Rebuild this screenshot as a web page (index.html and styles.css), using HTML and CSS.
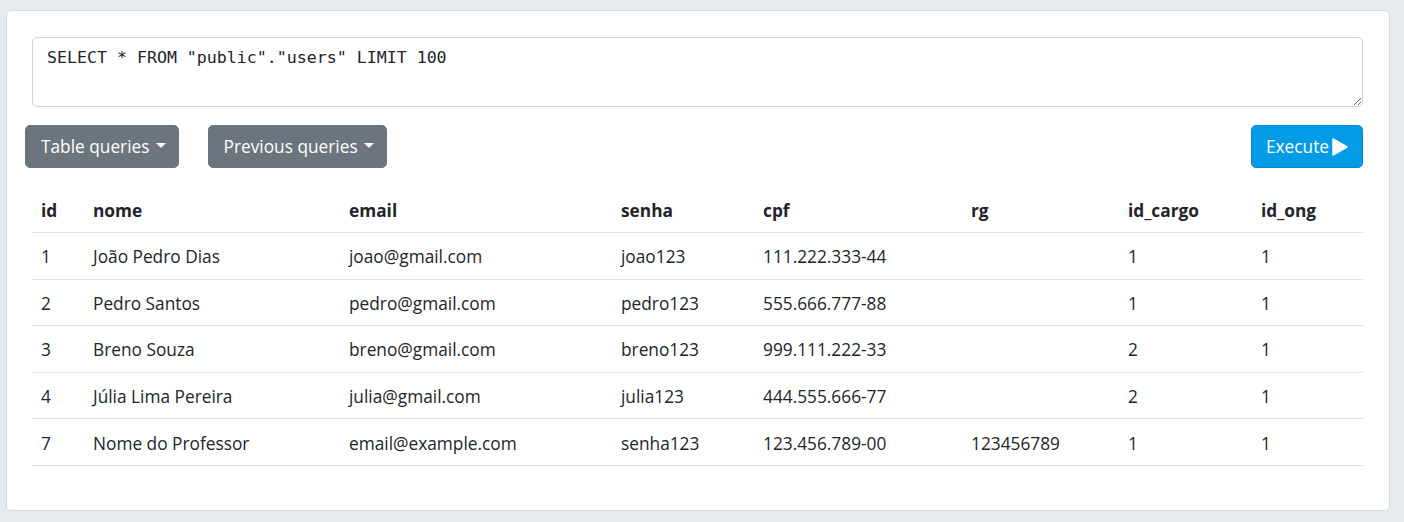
FILE: index.html
```html
<!DOCTYPE html>
<html lang="pt">
<head>
<meta charset="utf-8">
<title>Query</title>
<link rel="stylesheet" href="styles.css">
</head>
<body>
<div class="page">
  <div class="card">
    <textarea class="sql" spellcheck="false">SELECT * FROM "public"."users" LIMIT 100</textarea>
    <div class="toolbar">
      <button class="btn btn-gray">Table queries<span class="caret"></span></button>
      <button class="btn btn-gray">Previous queries<span class="caret"></span></button>
      <span class="spacer"></span>
      <button class="btn btn-blue">Execute<svg class="play" viewBox="0 0 16 18" width="16" height="18"><path d="M1 1 L15 9 L1 17 Z" fill="#fff" stroke="#fff" stroke-width="1.5" stroke-linejoin="round"/></svg></button>
    </div>
    <table class="results">
      <colgroup>
        <col class="c-id"><col class="c-nome"><col class="c-email"><col class="c-senha"><col class="c-cpf"><col class="c-rg"><col class="c-cargo"><col class="c-ong">
      </colgroup>
      <thead>
        <tr><th>id</th><th>nome</th><th>email</th><th>senha</th><th>cpf</th><th>rg</th><th>id_cargo</th><th>id_ong</th></tr>
      </thead>
      <tbody>
        <tr><td>1</td><td>João Pedro Dias</td><td>joao@gmail.com</td><td>joao123</td><td>111.222.333-44</td><td></td><td>1</td><td>1</td></tr>
        <tr><td>2</td><td>Pedro Santos</td><td>pedro@gmail.com</td><td>pedro123</td><td>555.666.777-88</td><td></td><td>1</td><td>1</td></tr>
        <tr><td>3</td><td>Breno Souza</td><td>breno@gmail.com</td><td>breno123</td><td>999.111.222-33</td><td></td><td>2</td><td>1</td></tr>
        <tr><td>4</td><td>Júlia Lima Pereira</td><td>julia@gmail.com</td><td>julia123</td><td>444.555.666-77</td><td></td><td>2</td><td>1</td></tr>
        <tr><td>7</td><td>Nome do Professor</td><td>email@example.com</td><td>senha123</td><td>123.456.789-00</td><td>123456789</td><td>1</td><td>1</td></tr>
      </tbody>
    </table>
  </div>
</div>
</body>
</html>
```
FILE: styles.css
```css
html, body {
  margin: 0;
  padding: 0;
}
body {
  background: #e5ebef;
  font-family: "Open Sans", "Noto Sans", sans-serif;
  color: #212529;
  height: 522px;
  overflow: hidden;
}
.page {
  padding: 10px 14px 10px 6px;
}
.card {
  background: #fff;
  border: 1px solid #d3dce5;
  border-radius: 5px;
  padding: 26px 26px 44px 25px;
  display: flex;
  flex-direction: column;
}
.sql {
  display: block;
  box-sizing: border-box;
  width: 100%;
  height: 70px;
  margin: 0;
  border: 1px solid #ced4da;
  border-radius: 5px;
  padding: 8px 14px;
  font-family: "DejaVu Sans Mono", monospace;
  font-size: 16.6px;
  line-height: 24px;
  color: #212529;
  resize: vertical;
  outline: none;
}
.toolbar {
  display: flex;
  align-items: center;
  gap: 29px;
  margin: 18px 0 21px -7px;
}
.spacer {
  flex: 1;
}
.btn {
  display: inline-flex;
  align-items: center;
  box-sizing: border-box;
  height: 43px;
  border-radius: 5px;
  font-family: "Open Sans", "Noto Sans", sans-serif;
  font-size: 17.3px;
  color: #fff;
  padding: 0 12px 0 15px;
  cursor: pointer;
}
.btn-gray {
  background: #6c757d;
  border: 1px solid #6c757d;
}
.btn-blue {
  background: #039be5;
  border: 1px solid #0288d1;
  padding: 0 14px 0 14px;
}
.caret {
  display: inline-block;
  width: 0;
  height: 0;
  margin-left: 6px;
  border-top: 5px solid #fff;
  border-left: 5px solid transparent;
  border-right: 5px solid transparent;
  position: relative;
  top: -1px;
}
.play {
  margin-left: 3px;
}
.results {
  width: 100%;
  border-collapse: collapse;
  table-layout: fixed;
  font-size: 17.3px;
}
.c-id { width: 52px; }
.c-nome { width: 256px; }
.c-email { width: 272px; }
.c-senha { width: 142px; }
.c-cpf { width: 208px; }
.c-rg { width: 157px; }
.c-cargo { width: 133px; }
.c-ong { width: auto; }
.results th, .results td {
  text-align: left;
  padding: 0 9px;
  white-space: nowrap;
}
.results th {
  font-weight: 700;
  height: 43px;
  border-bottom: 1px solid #dee2e6;
}
.results td {
  height: 46.6px;
  padding-top: 2px;
  box-sizing: border-box;
  border-bottom: 1px solid #dee2e6;
}
```
